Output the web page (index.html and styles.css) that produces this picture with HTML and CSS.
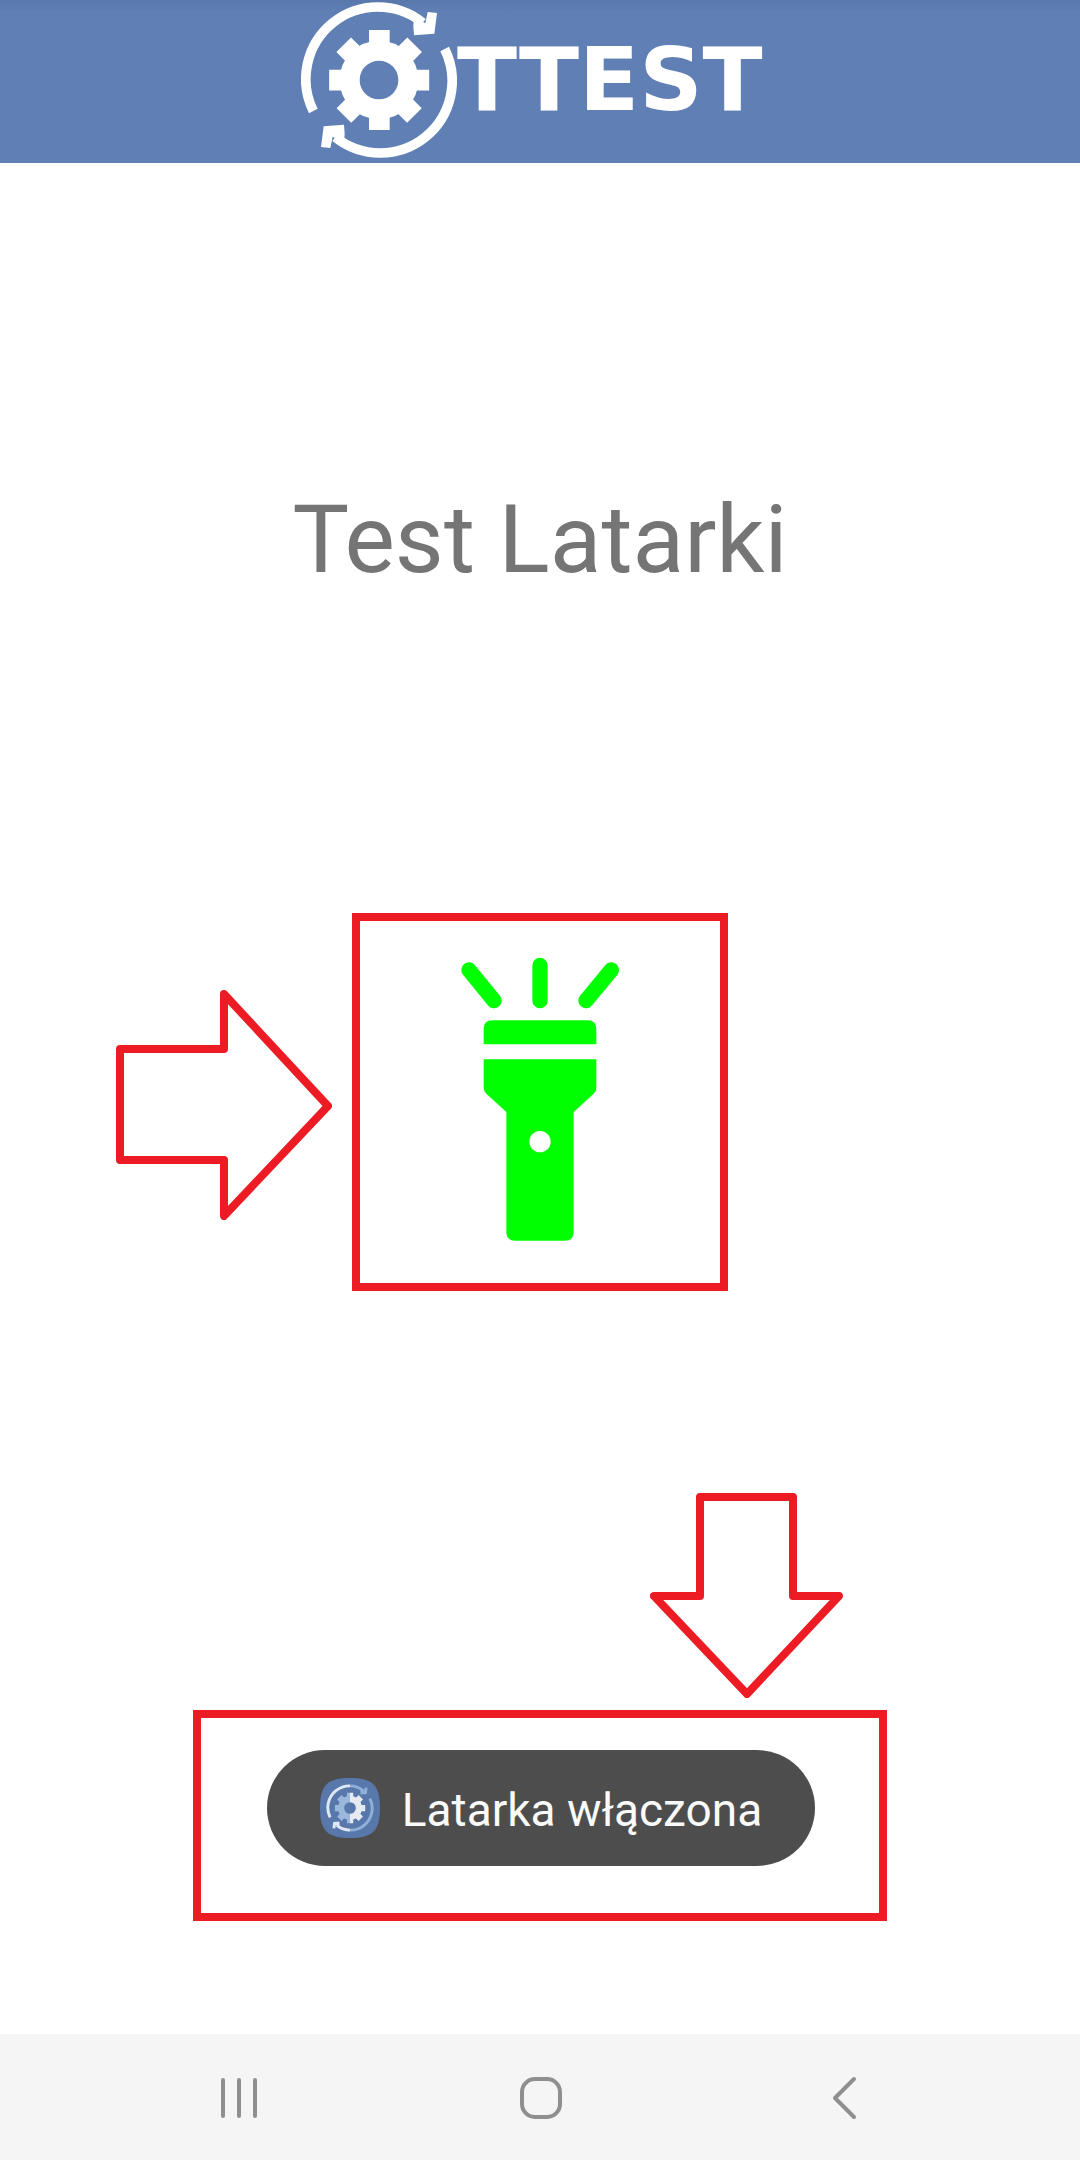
FILE: index.html
```html
<!DOCTYPE html>
<html lang="pl">
<head>
<meta charset="utf-8">
<meta name="viewport" content="width=device-width, initial-scale=1">
<title>Test Latarki</title>
<link rel="stylesheet" href="styles.css">
</head>
<body>
<svg class="defs" aria-hidden="true">
  <defs>
    <g id="ring">
      <path d="M68 333A216 216 0 0 1 396 68M462 147A216 216 0 0 1 134 412" fill="none" stroke="currentColor" stroke-width="29"/>
      <path d="M411 36L439 39L431 101L370 106L368 79L370 50L404 70ZM119 444L91 441L99 379L160 374L162 401L160 430L126 410Z" fill="currentColor"/>
    </g>
    <g id="gear">
      <circle cx="265" cy="240" r="88" fill="none" stroke="currentColor" stroke-width="60"/>
      <g id="teeth" fill="currentColor">
        <path id="tooth" d="M235 90H297V135H235ZM235 345H297V390H235Z"/>
        <use href="#tooth" transform="rotate(45 265.500 240)"/>
        <use href="#tooth" transform="rotate(90 265.500 240)"/>
        <use href="#tooth" transform="rotate(135 265.500 240)"/>
      </g>
    </g>
    <clipPath id="left"><path d="M-32 -57H265V537H-32Z"/></clipPath>
    <clipPath id="right"><path d="M265 -57H562V537H265Z"/></clipPath>
  </defs>
</svg>

<header class="topbar">
  <div class="logo">
    <svg class="logo-mark" viewBox="31 6 468 468" aria-hidden="true">
      <use href="#ring"/>
      <use href="#gear"/>
    </svg>
    <span class="logo-text">TTEST</span>
  </div>
</header>

<main class="screen">
  <h1 class="title">Test Latarki</h1>

  <div class="torch-row">
    <svg class="arrow-right" viewBox="0 0 216 230" aria-hidden="true">
      <path d="M4 59H108V4L212 116L108 226V170H4Z"/>
    </svg>
    <button class="torch" type="button" aria-label="Latarka">
      <svg class="torch-icon" viewBox="360 170 480 855" aria-hidden="true">
        <path d="M387 209L462 301M600 195V301M814 209L738 301" fill="none" stroke="#00ff00" stroke-width="46" stroke-linecap="round"/>
        <path d="M431 432V386Q431 360 457 360H743Q769 360 769 386V432Z" fill="#00ff00"/>
        <path fill-rule="evenodd" d="M431 477H769V562Q769 572 761 580L701 635V994Q701 1021 674 1021H526Q499 1021 499 994V635L439 580Q431 572 431 562ZM600 692A32 32 0 1 0 600 756A32 32 0 1 0 600 692Z" fill="#00ff00"/>
      </svg>
    </button>
  </div>

  <div class="notice">
    <svg class="arrow-down" viewBox="0 0 193 205" aria-hidden="true">
      <path d="M50 4H143V103H189L97 201L4 103H50Z"/>
    </svg>
    <div class="notice-frame">
      <div class="toast" role="status">
        <svg class="app-icon" viewBox="-32 -57 594 594" aria-hidden="true">
          <path d="M265 -57C490 -57 562 15 562 240S490 537 265 537S-32 465 -32 240S40 -57 265 -57Z" fill="#5878ab"/>
          <g clip-path="url(#left)">
            <use href="#ring" color="#dfe8f5"/>
            <use href="#gear" color="#9bb8dc"/>
          </g>
          <g clip-path="url(#right)">
            <use href="#ring" color="#8fb0d8"/>
            <use href="#gear" color="#e6ebf2"/>
          </g>
        </svg>
        <span class="toast-text">Latarka włączona</span>
      </div>
    </div>
  </div>
</main>

<nav class="navbar" aria-label="System">
  <button type="button" aria-label="Ostatnie">
    <svg viewBox="0 0 48 48"><path d="M8 6V42M24 6V42M40 6V42"/></svg>
  </button>
  <button type="button" aria-label="Ekran główny">
    <svg viewBox="0 0 48 48"><rect x="6" y="5" width="38" height="38" rx="13"/></svg>
  </button>
  <button type="button" aria-label="Wstecz">
    <svg viewBox="0 0 48 48"><path d="M37 5L18 24L37 43"/></svg>
  </button>
</nav>
</body>
</html>
```
FILE: styles.css
```css
* {
  box-sizing: border-box;
}

body {
  margin: 0;
  min-height: 100vh;
  display: flex;
  flex-direction: column;
  background: #ffffff;
  font-family: Roboto, "Liberation Sans", sans-serif;
}

button {
  margin: 0;
  padding: 0;
  border: 0;
  background: none;
  cursor: pointer;
}

svg {
  display: block;
}

.defs {
  position: absolute;
  width: 0;
  height: 0;
}

.topbar {
  display: flex;
  justify-content: center;
  padding: 2px 0 5px;
  background: linear-gradient(#5877ab, #6080b5 12px);
  color: #ffffff;
}

.logo {
  display: flex;
  align-items: center;
  width: 478px;
}

.logo-mark {
  width: 156px;
  height: 156px;
}

.logo-text {
  font: bold 88px/88px "DejaVu Sans", sans-serif;
}

.screen {
  flex: 1;
  display: flex;
  flex-direction: column;
  align-items: center;
  padding: 321px 0 112px;
}

.title {
  margin: 0;
  font-size: 95px;
  font-weight: 400;
  line-height: 112px;
  color: #757575;
}

.torch-row {
  align-self: stretch;
  display: grid;
  grid-template-columns: 1fr auto 1fr;
  align-items: center;
  gap: 20px;
  margin-top: 317px;
}

.arrow-right,
.arrow-down {
  fill: none;
  stroke: #ed1c24;
  stroke-width: 8px;
  stroke-linejoin: round;
}

.arrow-right {
  justify-self: end;
  width: 216px;
  height: 230px;
  margin-top: 5px;
}

.torch {
  display: flex;
  justify-content: center;
  width: 376px;
  height: 378px;
  padding-top: 36px;
  border: 8px solid #ed1c24;
}

.torch-icon {
  width: 160px;
  height: 285px;
}

.notice {
  display: flex;
  flex-direction: column;
  align-items: flex-end;
  gap: 12px;
  margin-top: 202px;
}

.arrow-down {
  width: 193px;
  height: 205px;
  margin-right: 44px;
}

.notice-frame {
  padding: 32px 64px 47px 66px;
  border: 8px solid #ed1c24;
}

.toast {
  display: flex;
  align-items: center;
  gap: 22px;
  padding: 27px 53px;
  border-radius: 58px;
  background: #4d4d4d;
  color: #fafafa;
  font-size: 46px;
}

.toast-text {
  padding-top: 4px;
  line-height: 58px;
}

.app-icon {
  width: 60px;
  height: 60px;
}

.navbar {
  display: flex;
  padding: 0 88px;
  background: #f5f5f5;
}

.navbar button {
  flex: 1;
  display: flex;
  justify-content: center;
  padding: 40px 0 38px;
}

.navbar svg {
  width: 48px;
  height: 48px;
  fill: none;
  stroke: #8f8f8f;
  stroke-width: 4px;
  stroke-linecap: round;
  stroke-linejoin: round;
}
```
